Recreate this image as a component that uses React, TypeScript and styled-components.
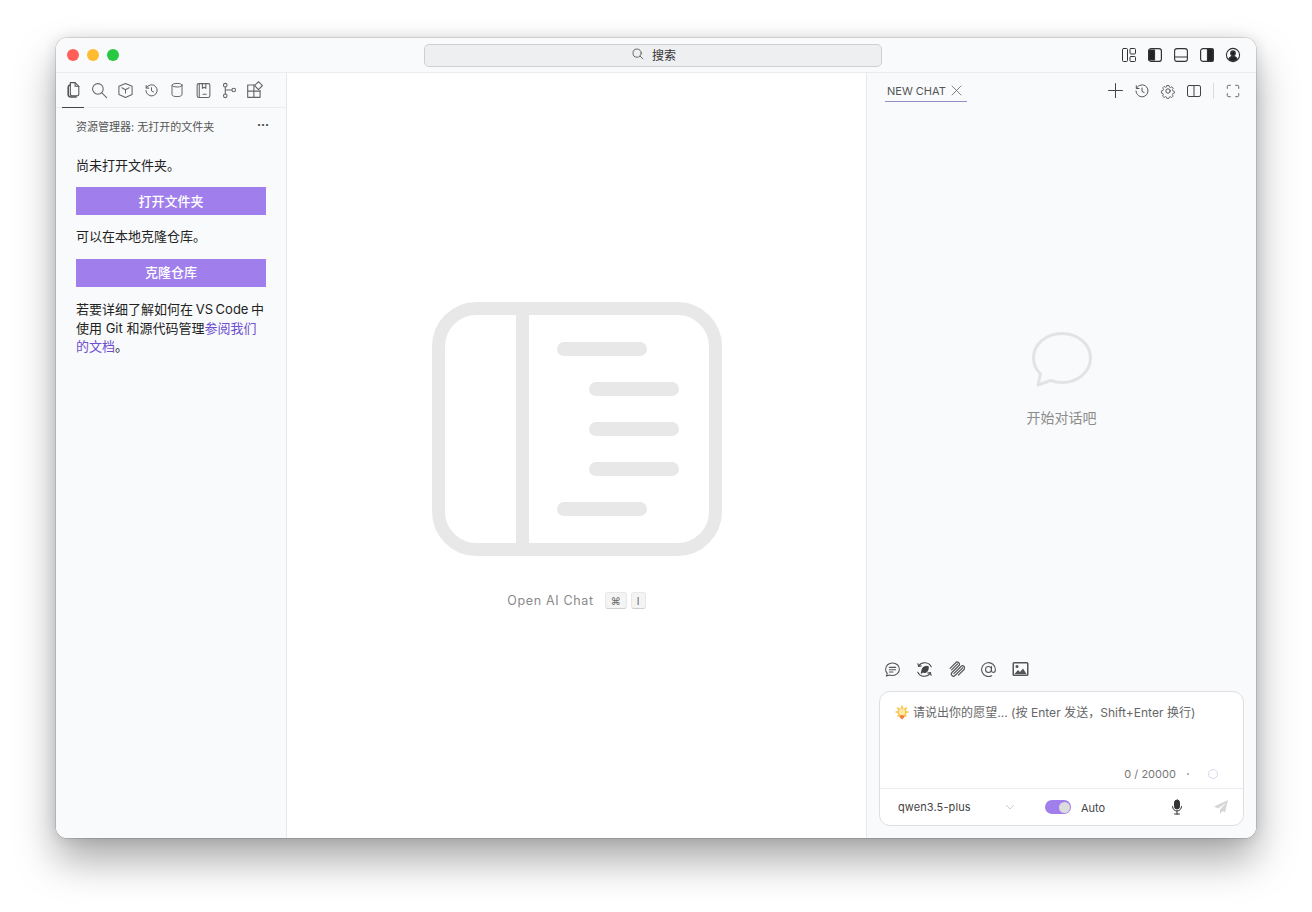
import React from "react";
import styled, { createGlobalStyle } from "styled-components";

const Global = createGlobalStyle`
  html, body { margin: 0; padding: 0; background: #fff; }
  body { font-family: Inter, "Noto Sans CJK SC", "Liberation Sans", sans-serif; -webkit-font-smoothing: antialiased; }
  * { box-sizing: border-box; }
`;

const Page = styled.div`
  width: 1312px; height: 912px; padding: 38px 56px 74px; overflow: hidden;
`;
const Win = styled.div`
  width: 1200px; height: 800px; border-radius: 11px; background: #f9fafb; overflow: hidden;
  display: flex; flex-direction: column;
  box-shadow: 0 0 0 .5px rgba(0,0,0,.22), 0 22px 40px rgba(0,0,0,.34), 0 0 14px rgba(0,0,0,.12);
`;
const TitleBar = styled.div`
  height: 35px; flex: none; display: grid; grid-template-columns: 368px 458px 1fr; align-items: center;
  border-bottom: 1px solid #ececee; background: #f9fafb;
`;
const Lights = styled.div`display: flex; gap: 8px; padding-left: 11px;`;
const Light = styled.span<{ $c: string }>`
  width: 12px; height: 12px; border-radius: 50%; background: ${p => p.$c};
`;
const Search = styled.div`
  height: 23px; border: 1px solid #cfcfd1; border-radius: 5px; background: #eeeff0;
  display: flex; align-items: center; justify-content: center; gap: 7px; padding: 0 0 2px 1px;
  font-size: 12px; color: #333;
`;
const TitleIcons = styled.div`
  display: flex; justify-content: flex-end; gap: 10px; padding-right: 15px; align-items: center;
`;
const Body = styled.div`flex: 1; display: flex; min-height: 0;`;
const Side = styled.aside`
  width: 231px; flex: none; border-right: 1px solid #e8e8ea; background: #f9fafb; display: flex; flex-direction: column;
`;
const ActBar = styled.div`
  height: 35px; flex: none; border-bottom: 1px solid #ececee; display: flex; align-items: center; padding-left: 6px;
`;
const ActItem = styled.div<{ $on?: boolean }>`
  width: 26px; height: 35px; display: flex; align-items: center; justify-content: center; padding-bottom: 1px;
  margin-bottom: -1px;
  ${p => p.$on ? "border-bottom: 1px solid #444; width: 22px; margin-right: 2px;" : ""}
`;
const SideHead = styled.div`
  height: 36px; flex: none; display: flex; justify-content: space-between; align-items: center;
  padding: 0 17px 1px 20px; font-size: 11px; color: #555;
`;
const Dots = styled.span`
  font-size: 12px; color: #444; line-height: 1; margin-top: -1px; font-weight: 700;
`;
const SideBody = styled.div`
  padding: 11.5px 20px 0; font-size: 13px; line-height: 18.5px; color: #222; display: flex; flex-direction: column;
`;
const Para = styled.p`margin: 0;`;
const Note = styled(Para)`margin-top: 1.5px;`;
const Tight = styled.span`word-spacing: -1px;`;
const Btn = styled.div`
  height: 28px; background: #a07fec; color: #fff; display: flex; align-items: center; justify-content: center;
  font-size: 13px; font-weight: 500; margin: 13px 0 12px;
`;
const DocLink = styled.span`color: #6b4fd0;`;
const Main = styled.main`
  flex: 1; background: #fff; display: flex; flex-direction: column; align-items: center; padding-top: 229px;
  border-right: 1px solid #e8e8ea;
`;
const Hint = styled.div`
  margin-top: 36px; display: flex; align-items: center; font-size: 12.5px; color: #8a8a8a; letter-spacing: .65px;
`;
const Kbd = styled.span<{ $w: number }>`
  height: 17px; width: ${p => p.$w}px; margin-left: 4px; border-radius: 3px; background: #f4f4f4;
  border: 1px solid #e8e8e8; border-bottom-color: #cfcfcf; font-size: 10px; color: #666; display: inline-flex;
  align-items: center; justify-content: center; letter-spacing: 0;
`;
const HintLabel = styled.span`margin-right: 7px;`;
const Chat = styled.section`
  width: 389px; flex: none; background: #f9fafb; display: flex; flex-direction: column; padding: 0 12px 12px;
`;
const ChatHead = styled.div`
  height: 29px; flex: none; display: flex; align-items: center; justify-content: space-between; padding: 0 4px 0 6px;
`;
const ChatTab = styled.div`
  height: 29px; width: 82px; display: flex; align-items: center; justify-content: space-between; padding: 7px 4px 0 2px;
  border-bottom: 1px solid #9a8bc4; font-size: 11px; color: #555;
`;
const ChatTools = styled.div`display: flex; align-items: center; gap: 10px; margin-top: 6px;`;
const Sep = styled.span`width: 1px; height: 16px; background: #dcdcdc; margin: 0 2px 0 1px;`;
const Empty = styled.div`
  flex: 1; display: flex; flex-direction: column; align-items: center; justify-content: flex-start; padding-top: 229px;
  font-size: 14px; color: #8c8c8c;
`;
const EmptyText = styled.div`margin-top: 18px;`;
const QuickRow = styled.div`
  height: 22px; flex: none; display: flex; align-items: center; gap: 15px; padding: 2px 0 0 5px; margin-bottom: 12px;
`;
const Composer = styled.div`
  height: 135px; flex: none; background: #fff; border: 1px solid #dfdfe2; border-radius: 11px; display: flex; flex-direction: column;
`;
const Prompt = styled.div`
  height: 97px; flex: none; padding: 12px 14px 0; font-size: 12px; color: #666; position: relative; display: flex; align-items: flex-start; gap: 3px;
  border-bottom: 1px solid #ececee; line-height: 18px; letter-spacing: .03px;
`;
const Counter = styled.div`
  position: absolute; right: 25px; bottom: 5px; display: flex; align-items: center; font-size: 11px; color: #777;
`;
const Dot = styled.span`width: 2px; height: 2px; border-radius: 50%; background: #999; margin: 0 19px 0 11px;`;
const Ring = styled.span`width: 10px; height: 10px; border-radius: 50%; border: 1px solid #dcd8ee;`;
const CompFoot = styled.div`
  flex: 1; display: flex; align-items: center; padding: 0 14px 0 18px; font-size: 11px; color: #444;
`;
const Model = styled.span`width: 107px; letter-spacing: .1px;`;
const Switch = styled.span`
  width: 26px; height: 14px; border-radius: 7px; background: #a07fec; position: relative; margin: 0 10px 0 30px; flex: none;
`;
const Knob = styled.span`
  position: absolute; right: 1px; top: 1.5px; width: 11px; height: 11px; border-radius: 50%; background: #dcdcdc;
`;
const AutoLabel = styled.span`flex: 1; margin-top: 1px;`;
const Mic = styled.span`display: flex; margin-right: 29px;`;

type IP = { s?: number; c?: string; w?: number; children: React.ReactNode };
const Ico = ({ s = 16, c = "#666", w = 1, children }: IP) => (
  <svg width={s} height={s} viewBox="0 0 16 16" fill="none" stroke={c} strokeWidth={w} strokeLinecap="round" strokeLinejoin="round">{children}</svg>
);
const HistoryIcon = ({ s = 16 }: { s?: number }) => (
  <Ico s={s} c="#555"><path d="M2.6 5.2A6 6 0 1 1 2 8" /><path d="M2.3 2.7v2.800h2.800" /><path d="M8 5v3.400l2.200 1.200" /></Ico>
);

export default function App() {
  return (
    <Page>
      <Global />
      <Win>
        <TitleBar>
          <Lights>
            <Light $c="#ff5f57" /><Light $c="#febc2e" /><Light $c="#28c840" />
          </Lights>
          <Search>
            <Ico s={14} c="#555"><circle cx="7" cy="7" r="4.700" /><path d="M10.500 10.500l3 3" /></Ico>
            <span>搜索</span>
          </Search>
          <TitleIcons>
            <Ico s={16} c="#333"><rect x="1.500" y="1.500" width="5" height="13" rx="1" /><rect x="9" y="1.500" width="5.500" height="5.500" rx="1" /><rect x="9" y="9.500" width="5.500" height="5" rx="1" /></Ico>
            <Ico s={16} c="#333" w={1.2}><rect x="1.600" y="1.600" width="12.800" height="12.800" rx="2.500" /><path d="M2 3h5.500v10H2z" fill="#222" /></Ico>
            <Ico s={16} c="#333" w={1.1}><rect x="1.600" y="1.600" width="12.800" height="12.800" rx="2.500" /><path d="M2 10h12" /></Ico>
            <Ico s={16} c="#333" w={1.2}><rect x="1.600" y="1.600" width="12.800" height="12.800" rx="2.500" /><path d="M8.500 2h5.500v12H8.500z" fill="#222" /></Ico>
            <Ico s={16} c="#333" w={1.1}><circle cx="8" cy="8" r="6.600" /><circle cx="8" cy="6.200" r="2.300" fill="#222" /><path d="M3.700 12.200c1-2 2.600-2.900 4.300-2.900s3.300.9 4.300 2.900a6 6 0 0 1-8.600 0z" fill="#222" /></Ico>
          </TitleIcons>
        </TitleBar>
        <Body>
          <Side>
            <ActBar>
              <ActItem $on>
                <Ico s={17} c="#555"><path d="M5 1.500h4.500L13 5v7a2 2 0 0 1-2 2H7a2 2 0 0 1-2-2z" /><path d="M9.500 1.500V5H13" /><path d="M5 3.500C3.500 4 3 5 3 6v6.500A2.500 2.500 0 0 0 5.500 15H10.500" strokeWidth="1.500" /></Ico>
              </ActItem>
              <ActItem><Ico s={17} c="#666"><circle cx="6.500" cy="6.500" r="5" /><path d="M10.200 10.200l4.500 4.500" /></Ico></ActItem>
              <ActItem><Ico s={17} c="#666"><path d="M8 1.500l6.200 2.600v7.600L8 14.500l-6.200-2.800V4.100z" /><path d="M4.600 5.500L8 7.200l3.400-1.700M8 7.200v3.200" /></Ico></ActItem>
              <ActItem><HistoryIcon s={15} /></ActItem>
              <ActItem><Ico s={16} c="#666"><ellipse cx="8" cy="3.200" rx="5" ry="1.800" /><path d="M3 3.200v9.600c0 1 2.200 1.800 5 1.800s5-.8 5-1.800V3.200" /></Ico></ActItem>
              <ActItem><Ico s={17} c="#666"><rect x="2" y="1.500" width="12" height="13" rx="1.500" /><path d="M4 1.500v13" /><path d="M7 1.500v4.500l1.600-1 1.600 1V1.500M7.500 11.500h3" /></Ico></ActItem>
              <ActItem><Ico s={17} c="#666"><circle cx="4" cy="3" r="1.700" /><circle cx="4" cy="13" r="1.700" /><circle cx="12" cy="7.500" r="1.700" /><path d="M4 4.700v6.600M4 7.500h6.300" /></Ico></ActItem>
              <ActItem><Ico s={18} c="#666"><path d="M7.500 3.500H1.500v11h11V8.500" /><path d="M1.500 9h11M7 3.500v11" /><rect x="8.600" y="1.600" width="5" height="5" transform="rotate(45 11.100 4.100)" /></Ico></ActItem>
            </ActBar>
            <SideHead>
              <span>资源管理器: 无打开的文件夹</span>
              <Dots>···</Dots>
            </SideHead>
            <SideBody>
              <Para>尚未打开文件夹。</Para>
              <Btn>打开文件夹</Btn>
              <Para>可以在本地克隆仓库。</Para>
              <Btn>克隆仓库</Btn>
              <Note><Tight>若要详细了解如何在 VS Code 中</Tight>使用 Git 和源代码管理<DocLink>参阅我们的文档</DocLink>。</Note>
            </SideBody>
          </Side>
          <Main>
            <svg width="290" height="254" viewBox="0 0 290 254" fill="none">
              <rect x="6.500" y="6.500" width="277" height="241" rx="38" stroke="#e8e8e8" strokeWidth="13" />
              <rect x="84" y="6" width="13" height="242" fill="#e8e8e8" />
              <g fill="#e8e8e8">
                <rect x="125" y="40" width="90" height="14" rx="7" />
                <rect x="157" y="80" width="90" height="14" rx="7" />
                <rect x="157" y="120" width="90" height="14" rx="7" />
                <rect x="157" y="160" width="90" height="14" rx="7" />
                <rect x="125" y="200" width="90" height="14" rx="7" />
              </g>
            </svg>
            <Hint>
              <HintLabel>Open AI Chat</HintLabel>
              <Kbd $w={22}>⌘</Kbd>
              <Kbd $w={15}>I</Kbd>
            </Hint>
          </Main>
          <Chat>
            <ChatHead>
              <ChatTab>
                <span>NEW CHAT</span>
                <Ico s={13} c="#666"><path d="M2.500 2.500l11 11M13.500 2.500l-11 11" /></Ico>
              </ChatTab>
              <ChatTools>
                <Ico s={17} c="#444"><path d="M8 1.500v13M1.500 8h13" /></Ico>
                <HistoryIcon />
                <Ico s={16} c="#555"><circle cx="8" cy="8" r="2.200" /><path d="M6.800 1.500h2.400l.4 1.900 1.300.6 1.700-1 1.600 1.800-1 1.600.4 1.400 1.900.5v2.200l-1.900.5-.5 1.300 1 1.700-1.700 1.700-1.600-1-1.400.5-.5 1.800H6.800l-.5-1.800-1.400-.6-1.600 1-1.700-1.600 1-1.700-.5-1.300-1.800-.5V7.800l1.900-.5.5-1.400-1-1.600 1.700-1.700 1.600 1 1.300-.6z" transform="translate(1.200 1.200) scale(.85)" /></Ico>
                <Ico s={16} c="#444"><rect x="1.500" y="2.500" width="13" height="11" rx="1.500" /><path d="M8 2.500v11" /></Ico>
                <Sep />
                <Ico s={14} c="#555"><path d="M1.500 5V2.800a1.300 1.300 0 0 1 1.300-1.300H5M11 1.500h2.200a1.300 1.300 0 0 1 1.300 1.300V5M14.500 11v2.200a1.300 1.300 0 0 1-1.300 1.300H11M5 14.500H2.800a1.300 1.300 0 0 1-1.300-1.300V11" /></Ico>
              </ChatTools>
            </ChatHead>
            <Empty>
              <svg width="62" height="58" viewBox="0 0 62 58" fill="none" stroke="#e3e3e3" strokeWidth="3" strokeLinejoin="round">
                <path d="M31 2.500c16 0 28.500 11 28.500 24.500S47 51.500 31 51.500c-4 0-8-.7-11.500-2L7 54l2.500-11C5 38.500 2.500 33 2.500 27 2.500 13.500 15 2.500 31 2.500z" />
              </svg>
              <EmptyText>开始对话吧</EmptyText>
            </Empty>
            <QuickRow>
              <Ico s={17} c="#555"><path d="M8 1.800c3.600 0 6.500 2.600 6.500 5.900s-2.900 5.900-6.500 5.900c-.9 0-1.800-.2-2.600-.5l-3.100 1 .8-2.500C1.900 10.600 1.500 9.200 1.500 7.700 1.500 4.400 4.400 1.800 8 1.800z" /><path d="M5 6h6M5 8.200h6M5 10.300h3.500" /></Ico>
              <Ico s={17} c="#444"><path d="M2.600 4.500A6.800 6.800 0 0 1 14.300 5.500M13.400 11.500A6.800 6.800 0 0 1 1.700 10.500" /><path d="M1.800 2.500l.6 2.600 2.500-.5M14.200 13.500l-.6-2.600-2.500.5" /><path d="M5.500 9.500c0-2.600 2-4.500 4.700-4.500.5 0 1 .1 1.300.3.300 2.800-1 5.500-3.400 5.500-.6 0-1.200-.2-1.600-.6L5 11.500z" fill="#444" /></Ico>
              <Ico s={17} c="#555" w={1.1}><g transform="rotate(45 8 8)"><path d="M3 11.500V4a2 2 0 0 1 4 0v9a2 2 0 0 0 4 0V2.500" /><path d="M5 11.500V3.500M9 12.500V3a2 2 0 0 1 4 0v7.500" /></g></Ico>
              <Ico s={17} c="#555"><circle cx="8" cy="8" r="2.800" /><path d="M10.800 5.200V9c0 1.200.8 1.800 1.700 1.800s2-.9 2-2.800A6.500 6.500 0 1 0 11 13.800" /></Ico>
              <svg width="17" height="14" viewBox="0 0 16 14" fill="#555">
                <path fillRule="evenodd" d="M1.500 0h13A1.500 1.500 0 0 1 16 1.500v11a1.500 1.500 0 0 1-1.500 1.500h-13A1.500 1.500 0 0 1 0 12.500v-11A1.500 1.500 0 0 1 1.500 0zM1.500 1.500v11h13v-11z" />
                <circle cx="4.500" cy="4.500" r="1.500" />
                <path d="M2 12l3.500-4 2 2 3-3.500 3.500 5.500z" />
              </svg>
            </QuickRow>
            <Composer>
              <Prompt>
                <svg width="16" height="16" viewBox="0 0 16 16">
                  <path d="M8 .5l1.600 4.200 3.900-2-1.700 4 3.700 1.300-3.700 1.500 1.200 3.500-3.400-1.200L8 15.500l-1.600-3.700-3.400 1.200 1.200-3.500L.5 8l3.700-1.300-1.700-4 3.900 2z" fill="#f8c44a" />
                  <circle cx="8" cy="8" r="3.200" fill="#fde9a6" />
                  <path d="M5 12.500l3 3 3-3-3-1.500z" fill="#ee7d3b" />
                </svg>
                <span>请说出你的愿望... (按 Enter 发送，Shift+Enter 换行)</span>
                <Counter>
                  <span>0 / 20000</span>
                  <Dot />
                  <Ring />
                </Counter>
              </Prompt>
              <CompFoot>
                <Model>qwen3.5-plus</Model>
                <svg width="10" height="6" viewBox="0 0 10 6" fill="none" stroke="#cfcfcf"><path d="M1 1l4 4 4-4" /></svg>
                <Switch><Knob /></Switch>
                <AutoLabel>Auto</AutoLabel>
                <Mic>
                  <svg width="14" height="16" viewBox="0 0 14 16" fill="#333" stroke="#333" strokeLinecap="round">
                    <rect x="4.500" y="1" width="5" height="9" rx="2.500" />
                    <path d="M2.500 7.500c0 2.500 2 4.500 4.500 4.500s4.500-2 4.500-4.500M7 12v3M4.500 15h5" fill="none" />
                  </svg>
                </Mic>
                <svg width="16" height="16" viewBox="0 0 16 16" fill="#d6d6d6"><path d="M15 1L1 7.500l4 2L13 4l-6 6.500V15l2.500-3 2.500 1.500z" /></svg>
              </CompFoot>
            </Composer>
          </Chat>
        </Body>
      </Win>
    </Page>
  );
}
